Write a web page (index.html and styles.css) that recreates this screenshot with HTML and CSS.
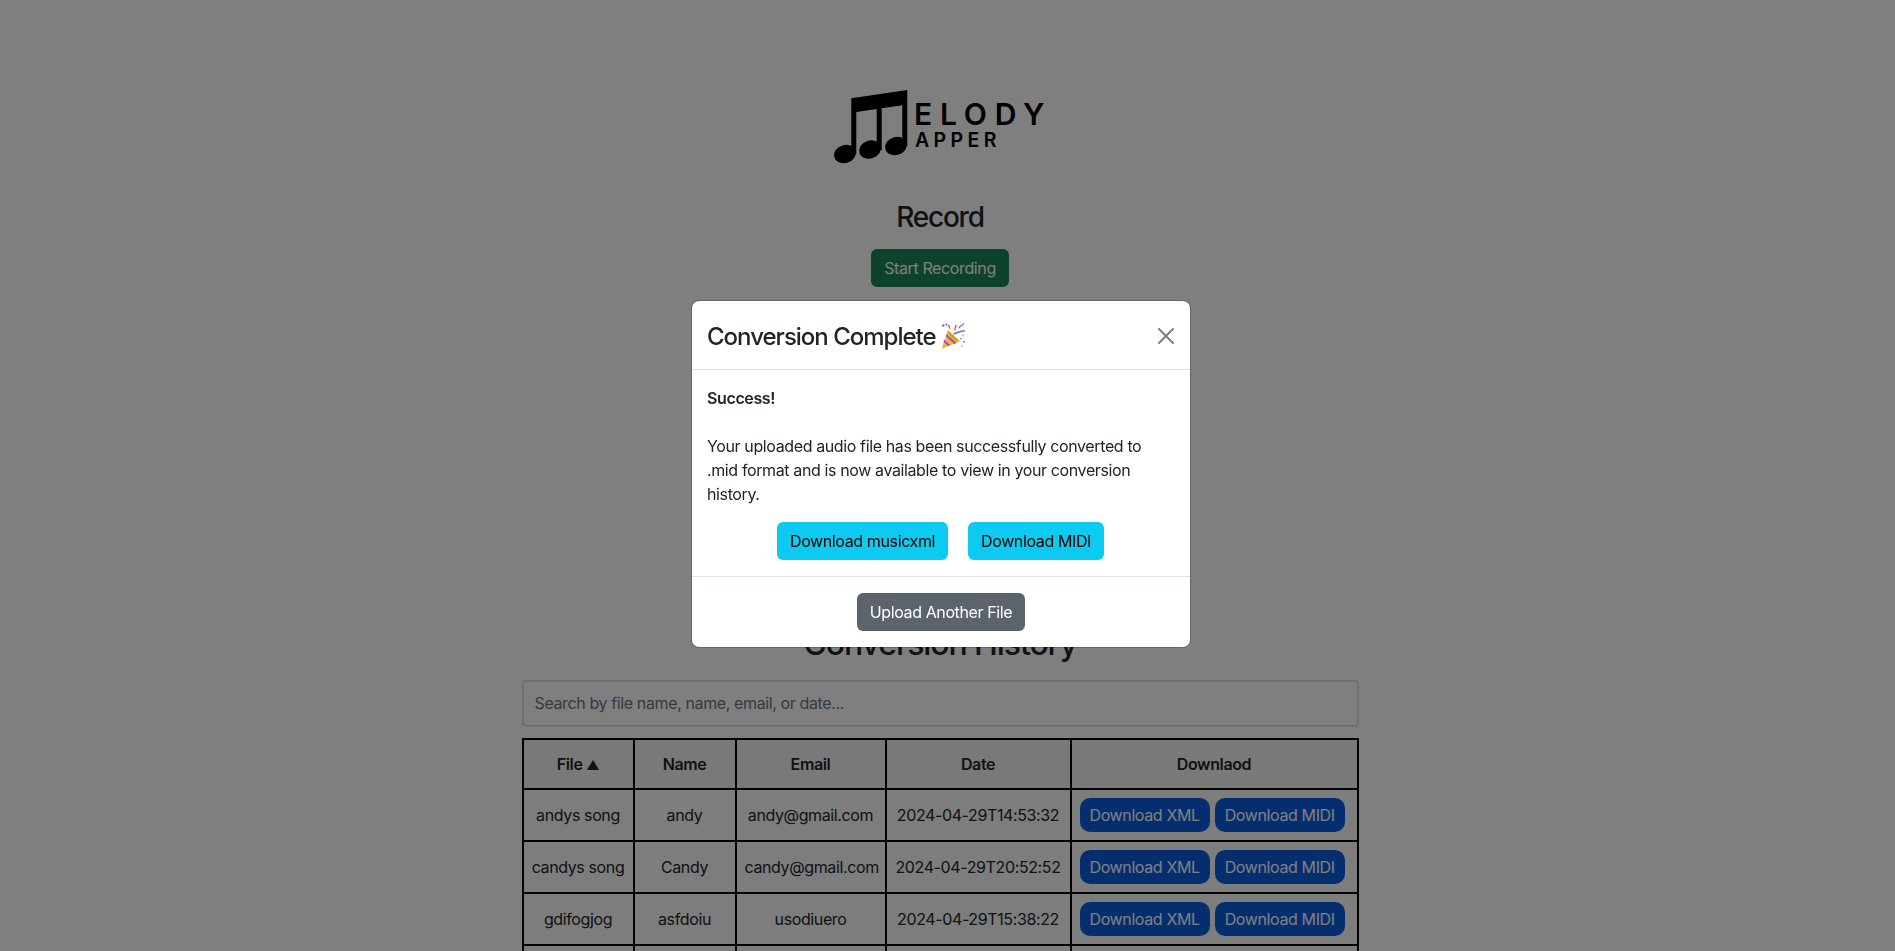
FILE: index.html
```html
<!DOCTYPE html>
<html lang="en">
<head>
  <meta charset="UTF-8" />
  <title>Melody Mapper</title>
  <link rel="stylesheet" href="styles.css">
</head>
<body>
  <main class="page">
    <!-- Logo -->
    <svg class="logo" viewBox="0 0 212 78" role="img" aria-label="Melody Mapper">
      <path d="M17.300 8.300 73.300 0V56h-5V15.200L47.700 18.200V60h-5V19L22.300 22V64h-5z" />
      <ellipse cx="11" cy="64" rx="11" ry="9" transform="rotate(-18 11 64)" />
      <ellipse cx="36" cy="59.500" rx="11" ry="9" transform="rotate(-18 36 59.500)" />
      <ellipse cx="62" cy="56" rx="11" ry="9" transform="rotate(-18 62 56)" />
      <text class="logo-big" x="80" y="35" textLength="130">ELODY</text>
      <text class="logo-small" x="81" y="57" textLength="81">APPER</text>
    </svg>

    <!-- Record -->
    <section class="record">
      <h3>Record</h3>
      <button class="btn btn-green" type="button">Start Recording</button>
    </section>

    <!-- History -->
    <section class="history">
      <h2>Conversion History</h2>
      <input class="search" type="text" placeholder="Search by file name, name, email, or date..." />
      <table class="history-table">
        <thead>
          <tr>
            <th class="col-file">File <span class="sort-arrow">▲</span></th>
            <th class="col-name">Name</th>
            <th class="col-email">Email</th>
            <th class="col-date">Date</th>
            <th>Downlaod</th>
          </tr>
        </thead>
        <tbody>
          <tr>
            <td>andys song</td>
            <td>andy</td>
            <td>andy@gmail.com</td>
            <td>2024-04-29T14:53:32</td>
            <td><a class="pill">Download XML</a><a class="pill">Download MIDI</a></td>
          </tr>
          <tr>
            <td>candys song</td>
            <td>Candy</td>
            <td>candy@gmail.com</td>
            <td>2024-04-29T20:52:52</td>
            <td><a class="pill">Download XML</a><a class="pill">Download MIDI</a></td>
          </tr>
          <tr>
            <td>gdifogjog</td>
            <td>asfdoiu</td>
            <td>usodiuero</td>
            <td>2024-04-29T15:38:22</td>
            <td><a class="pill">Download XML</a><a class="pill">Download MIDI</a></td>
          </tr>
          <tr>
            <td></td>
            <td></td>
            <td></td>
            <td></td>
            <td></td>
          </tr>
        </tbody>
      </table>
    </section>
  </main>

  <!-- Modal -->
  <div class="backdrop"></div>
  <div class="modal-wrap">
    <div class="modal" role="dialog" aria-label="Conversion Complete">
      <div class="modal-header">
        <h4>Conversion Complete</h4>
        <svg class="party" viewBox="0 0 26 26" aria-hidden="true">
          <path d="M8.500 7 20 17.500 2.500 25z" fill="#f2b632" />
          <path d="M7 10.500 17 19.200l-2.400 1.100L6.500 12.500zM4.800 16l6 5.300-2 .9-4.500-4z" fill="#a24fd0" />
          <path d="M8.500 7 20 17.500c-1.500.8-5-1-7.500-3.500S7.700 8.500 8.500 7z" fill="#d99a1e" />
          <path d="M14 10.500c3-1 6-2.500 11-3" stroke="#5b7cf0" stroke-width="1.600" fill="none" />
          <path d="M10.500 5.500 9 1.500M15 7l1.500-5" stroke="#e0528a" stroke-width="1.400" fill="none" />
          <path d="M19 5c1-1 1-2 2.500-2.500S23 1 24 .5" stroke="#d8578f" stroke-width="1.300" fill="none" />
          <circle cx="4" cy="2.500" r="1.200" fill="#5b7cf0" />
          <circle cx="7" cy="1.500" r=".9" fill="#a24fd0" />
          <circle cx="23" cy="12" r="1" fill="#e5b060" />
          <circle cx="21" cy="15" r=".8" fill="#a24fd0" />
          <circle cx="24" cy="18" r=".9" fill="#e0528a" />
          <circle cx="22" cy="22" r=".9" fill="#e8a0b8" />
        </svg>
        <button class="close" type="button" aria-label="Close">
          <svg viewBox="0 0 16 16"><path d="M.293.293a1 1 0 0 1 1.414 0L8 6.586 14.293.293a1 1 0 1 1 1.414 1.414L9.414 8l6.293 6.293a1 1 0 0 1-1.414 1.414L8 9.414l-6.293 6.293a1 1 0 0 1-1.414-1.414L6.586 8 .293 1.707a1 1 0 0 1 0-1.414z" /></svg>
        </button>
      </div>
      <div class="modal-body">
        <p class="success">Success!</p>
        <p>Your uploaded audio file has been successfully converted to .mid format and is now available to view in your conversion history.</p>
        <div class="modal-actions">
          <button class="btn btn-info" type="button">Download musicxml</button>
          <button class="btn btn-info" type="button">Download MIDI</button>
        </div>
      </div>
      <div class="modal-footer">
        <button class="btn btn-grey" type="button">Upload Another File</button>
      </div>
    </div>
  </div>
</body>
</html>
```

FILE: styles.css
```css
* {
  box-sizing: border-box;
}
html, body {
  height: 100%;
}
body {
  margin: 0;
  overflow: hidden;
  background: #fff;
  color: #212529;
  font-family: Inter, "Liberation Sans", sans-serif;
  font-size: 16px;
  letter-spacing: -0.38px;
  line-height: 1.5;
}
/* 15px on the right is the scrollbar gutter */
.page {
  display: flex;
  flex-direction: column;
  align-items: center;
  height: 100%;
  padding: 90px 15px 0 0;
  overflow: hidden;
}
.logo {
  display: block;
  flex: none;
  width: 212px;
  height: 78px;
}
.logo-big {
  font-size: 30px;
  font-weight: 600;
}
.logo-small {
  font-size: 19.500px;
  font-weight: 600;
}

/* record */
.record {
  display: flex;
  flex-direction: column;
  align-items: center;
  margin-top: 33px;
}
.record h3 {
  margin: 0 0 14px;
  font-size: 28px;
  font-weight: 500;
  letter-spacing: -1.200px;
  line-height: 1.2;
}
.btn {
  height: 38px;
  padding: 6px 12px;
  border: 1px solid transparent;
  border-radius: 6px;
  font: inherit;
  letter-spacing: inherit;
  cursor: pointer;
}
.btn-green {
  background: #198754;
  color: #fff;
}
.btn-info {
  background: #0dcaf0;
  color: #000;
}
.btn-grey {
  background: #5c636a;
  color: #fff;
}

/* history */
.history {
  display: flex;
  flex-direction: column;
  align-items: center;
  flex: none;
  width: 837px;
  margin-top: 338px;
}
.history h2 {
  margin: 0 0 17px;
  font-size: 32px;
  font-weight: 500;
  letter-spacing: -1.100px;
  line-height: 1.2;
}
.search {
  width: 100%;
  height: 47px;
  margin-bottom: 11px;
  padding: 6px 11px;
  border: 2px solid #dee2e6;
  border-radius: 4px;
  background: #fff;
  font: inherit;
  letter-spacing: inherit;
}
.search::placeholder {
  color: #6c757d;
}
.history-table {
  width: 100%;
  table-layout: fixed;
  border-collapse: collapse;
  text-align: center;
}
.history-table th,
.history-table td {
  height: 52px;
  padding: 8px;
  border: 2px solid #000;
}
.history-table th {
  height: 50px;
  background: #f2f2f2;
  font-weight: 600;
}
.history-table td {
  background: #fafafa;
  white-space: nowrap;
}
.sort-arrow {
  font-size: 13px;
}
.col-file {
  width: 111px;
}
.col-name {
  width: 102px;
}
.col-email {
  width: 150px;
}
.col-date {
  width: 185px;
}
.pill {
  display: inline-block;
  height: 34px;
  margin-right: 5px;
  padding: 5px 10px;
  border-radius: 10px;
  background: #0b5cdf;
  color: #fff;
  line-height: 24px;
}

/* modal */
.backdrop {
  position: fixed;
  inset: 0;
  background: rgba(0, 0, 0, 0.5);
}
.modal-wrap {
  position: fixed;
  inset: 0 13px 0 0;
  display: flex;
  align-items: center;
  justify-content: center;
  padding-bottom: 3px;
}
.modal {
  width: 500px;
  border: 1px solid rgba(0, 0, 0, 0.2);
  border-radius: 8px;
  background: #fff;
  background-clip: padding-box;
}
.modal-header {
  display: flex;
  align-items: center;
  padding: 17px 16px 15px 15px;
  border-bottom: 1px solid #dee2e6;
}
.modal-header h4 {
  margin: 1px 0 -1px;
  font-size: 24px;
  font-weight: 500;
  letter-spacing: -1px;
  line-height: 1.5;
}
.party {
  width: 27px;
  height: 27px;
  margin-left: 3px;
}
.close {
  width: 16px;
  height: 16px;
  margin-left: auto;
  padding: 0;
  border: 0;
  background: none;
  opacity: 0.5;
}
.close svg {
  display: block;
  width: 16px;
  height: 16px;
  fill: #000;
}
.modal-body {
  padding: 16px 16px 16px 15px;
}
.modal-body p {
  margin: 0;
}
.modal-body .success {
  margin-bottom: 24px;
  font-weight: 600;
}
.modal-actions {
  display: flex;
  justify-content: center;
  gap: 20px;
  margin-top: 16px;
}
.modal-footer {
  display: flex;
  justify-content: center;
  padding: 16px;
  border-top: 1px solid #dee2e6;
}
```
